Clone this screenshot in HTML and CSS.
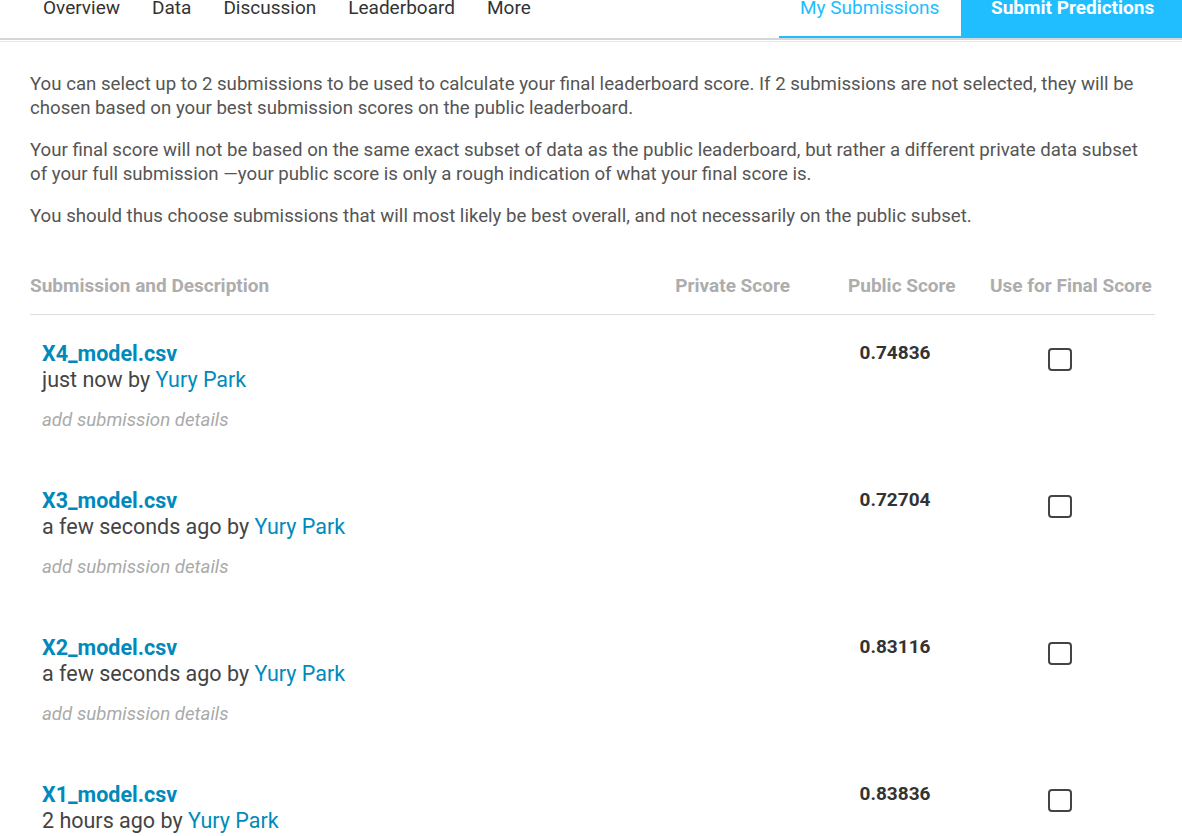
FILE: index.html
```html
<!DOCTYPE html>
<html lang="en">
<head>
<meta charset="utf-8">
<title>My Submissions</title>
<link rel="stylesheet" href="styles.css">
</head>
<body>
<header class="topbar">
  <nav class="tabs">
    <a class="tab">Overview</a>
    <a class="tab">Data</a>
    <a class="tab">Discussion</a>
    <a class="tab">Leaderboard</a>
    <a class="tab">More</a>
  </nav>
  <div class="actions">
    <a class="mysub">My Submissions</a>
    <a class="submit">Submit Predictions</a>
  </div>
</header>
<main class="content">
  <p class="info">You can select up to 2 submissions to be used to calculate your final leaderboard score. If 2 submissions are not selected, they will be chosen based on your best submission scores on the public leaderboard.</p>
  <p class="info">Your final score will not be based on the same exact subset of data as the public leaderboard, but rather a different private data subset of your full submission —your public score is only a rough indication of what your final score is.</p>
  <p class="info">You should thus choose submissions that will most likely be best overall, and not necessarily on the public subset.</p>

  <div class="table">
    <div class="thead">
      <div class="th th-desc">Submission and Description</div>
      <div class="th th-private">Private Score</div>
      <div class="th th-public">Public Score</div>
      <div class="th th-use">Use for Final Score</div>
    </div>

    <div class="row">
      <div class="desc">
        <a class="fname">X4_model.csv</a>
        <div class="by">just now by <a class="user">Yury Park</a></div>
        <div class="details">add submission details</div>
      </div>
      <div class="private"></div>
      <div class="public">0.74836</div>
      <div class="use"><span class="check"></span></div>
    </div>

    <div class="row">
      <div class="desc">
        <a class="fname">X3_model.csv</a>
        <div class="by">a few seconds ago by <a class="user">Yury Park</a></div>
        <div class="details">add submission details</div>
      </div>
      <div class="private"></div>
      <div class="public">0.72704</div>
      <div class="use"><span class="check"></span></div>
    </div>

    <div class="row">
      <div class="desc">
        <a class="fname">X2_model.csv</a>
        <div class="by">a few seconds ago by <a class="user">Yury Park</a></div>
        <div class="details">add submission details</div>
      </div>
      <div class="private"></div>
      <div class="public">0.83116</div>
      <div class="use"><span class="check"></span></div>
    </div>

    <div class="row">
      <div class="desc">
        <a class="fname">X1_model.csv</a>
        <div class="by">2 hours ago by <a class="user">Yury Park</a></div>
        <div class="details">add submission details</div>
      </div>
      <div class="private"></div>
      <div class="public">0.83836</div>
      <div class="use"><span class="check"></span></div>
    </div>
  </div>
</main>
</body>
</html>
```
FILE: styles.css
```css
* { box-sizing: border-box; }
html, body { margin: 0; padding: 0; background: #fff; }
body {
  font-family: Roboto, "Liberation Sans", Arial, sans-serif;
  color: #555;
  overflow: hidden;
}
a { text-decoration: none; cursor: pointer; }

.topbar {
  display: flex;
  justify-content: space-between;
  border-bottom: 1px solid #e6e6e6;
  padding-bottom: 1px;
}
.tabs, .actions {
  display: flex;
  height: 40px;
  border-bottom: 2px solid #d6d6d6;
}
.tabs { flex: 1; padding-left: 27px; }
.tab {
  font-size: 19px;
  line-height: 16px;
  color: #333;
  padding: 0 16px;
}
.actions { width: 403px; }
.mysub {
  width: 182px;
  font-size: 19px;
  line-height: 16px;
  color: #20beff;
  padding-left: 21px;
  border-bottom: 2px solid #20beff;
}
.submit {
  flex: 1;
  background: #20beff;
  color: #fff;
  font-weight: 700;
  font-size: 19px;
  line-height: 16px;
  padding-left: 30px;
}

.content { padding: 31px 27px 0 30px; }
.info {
  margin: 0 0 19px;
  font-size: 18.65px;
  line-height: 23.5px;
  color: #555;
}

.table { margin-top: 45px; }
.thead, .row {
  display: grid;
  grid-template-columns: 630px 140px 190px 1fr;
}
.thead {
  border-bottom: 1px solid #dedede;
  padding-bottom: 16px;
}
.th {
  font-size: 19px;
  line-height: 24px;
  font-weight: 700;
  color: #adadad;
  white-space: nowrap;
}
.th-private { text-align: right; padding-right: 10px; }
.th-public { padding-left: 48px; }
.th-use { text-align: left; }

.row { padding: 26px 0 29px; }
.desc { padding-left: 12px; }
.fname {
  display: block;
  font-size: 21.5px;
  line-height: 26px;
  font-weight: 700;
  color: #008abc;
}
.by {
  font-size: 21.5px;
  line-height: 26px;
  color: #444;
}
.user { color: #008abc; }
.details {
  margin-top: 14px;
  font-size: 18.7px;
  line-height: 26px;
  font-style: italic;
  color: #aaa;
}
.public {
  font-size: 19px;
  line-height: 24px;
  font-weight: 700;
  color: #333;
  text-align: center;
}
.use { padding: 7px 0 0 58px; }
.check {
  display: block;
  width: 24px;
  height: 23px;
  border: 2px solid #444;
  border-radius: 4px;
}
```
